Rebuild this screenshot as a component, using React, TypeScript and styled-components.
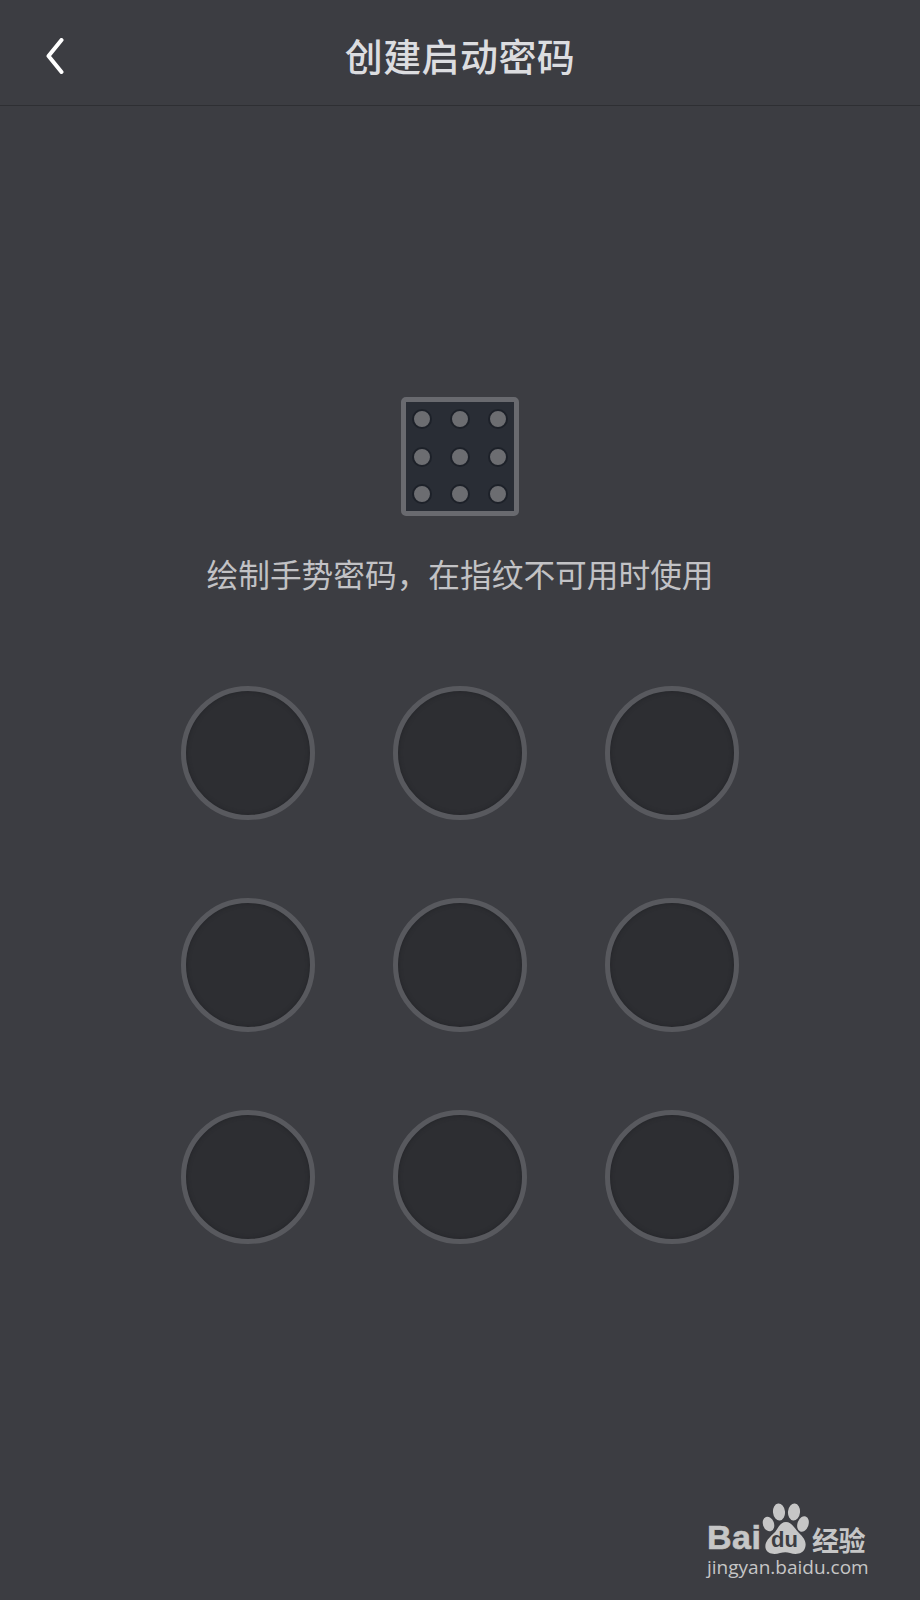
import React from "react";
import styled, { createGlobalStyle } from "styled-components";

const Global = createGlobalStyle`
  html, body { margin: 0; padding: 0; background: #3c3d42; }
  body { font-family: "Noto Sans CJK SC", "Liberation Sans", sans-serif; }
`;

const Page = styled.div`
  position: relative;
  width: 920px;
  height: 1600px;
  overflow: hidden;
  background: #3c3d42;
  display: flex;
  flex-direction: column;
  align-items: center;
`;

const Header = styled.header`
  box-sizing: border-box;
  width: 100%;
  height: 106px;
  padding: 0 46px 0;
  display: grid;
  grid-template-columns: 40px 1fr 40px;
  align-items: center;
  border-bottom: 1px solid #2e2f33;
`;

const BackButton = styled.button`
  width: 20px;
  height: 36px;
  padding: 0;
  margin-top: 6px;
  border: 0;
  background: none;
  display: flex;
  color: #ffffff;
`;

const Title = styled.h1`
  margin: 4px 0 0;
  text-align: center;
  font-size: 38px;
  line-height: 50px;
  letter-spacing: 0.4px;
  font-weight: 500;
  color: #dcdde0;
`;

const PatternBadge = styled.div`
  box-sizing: border-box;
  width: 118px;
  height: 119px;
  margin-top: 291px;
  padding: 7px 6px;
  border: 5px solid #696a6f;
  border-radius: 5px;
  background: #292d35;
  display: grid;
  grid-template-columns: repeat(3, 20px);
  grid-auto-rows: 20px;
  justify-content: space-between;
  align-content: space-between;
`;

const BadgeDot = styled.span`
  box-sizing: border-box;
  width: 20px;
  height: 20px;
  border-radius: 50%;
  border: 2px solid #1d2129;
  background: #6c6d71;
`;

const Hint = styled.p`
  margin: 35px 0 0;
  font-size: 31.7px;
  line-height: 44px;
  font-weight: 400;
  color: #c2c2c5;
  white-space: nowrap;
`;

const Keypad = styled.div`
  margin-top: 91px;
  display: grid;
  grid-template-columns: repeat(3, 134px);
  grid-auto-rows: 134px;
  gap: 78px;
`;

const Node = styled.div`
  box-sizing: border-box;
  border-radius: 50%;
  border: 5px solid #58595e;
  background: #2d2e32;
  box-shadow: inset 0 0 4px #232428;
`;

const Watermark = styled.div`
  position: absolute;
  left: 707px;
  top: 1503px;
  width: 165px;
  color: #c6c6c6;
`;

const LogoRow = styled.div`
  display: flex;
  align-items: flex-end;
  height: 52px;
`;

const BaiText = styled.span`
  font-family: "Liberation Sans", sans-serif;
  font-weight: 700;
  font-size: 34px;
  line-height: 36px;
  width: 55px;
  letter-spacing: 0.5px;
  -webkit-text-stroke: 0.6px #c6c6c6;
`;

const Paw = styled.div`
  position: relative;
  width: 47px;
  height: 52px;
`;

const PawSvg = styled.svg`
  display: block;
  width: 47px;
  height: 52px;
`;

const DuText = styled.span`
  position: absolute;
  left: 9px;
  bottom: 3px;
  font-family: "Liberation Sans", sans-serif;
  font-weight: 700;
  font-size: 22px;
  line-height: 24px;
  color: #3c3d42;
`;

const CnText = styled.span`
  font-size: 27px;
  line-height: 30px;
  font-weight: 700;
  margin-left: 3px;
  white-space: nowrap;
  letter-spacing: -0.5px;
`;

const UrlText = styled.div`
  font-family: "Open Sans", "Liberation Sans", sans-serif;
  font-size: 19px;
  line-height: 24px;
  white-space: nowrap;
`;

const App: React.FC = () => (
  <Page>
    <Global />
    <Header>
      <BackButton aria-label="返回">
        <svg width="20" height="36" viewBox="0 0 20 36" fill="none">
          <path d="M15.5 2 L2.5 18 L15.5 34" stroke="currentColor" strokeWidth="4" strokeLinecap="round" strokeLinejoin="round" />
        </svg>
      </BackButton>
      <Title>创建启动密码</Title>
      <span />
    </Header>
    <PatternBadge>
      {Array.from({ length: 9 }, (_, i) => <BadgeDot key={i} />)}
    </PatternBadge>
    <Hint>绘制手势密码，在指纹不可用时使用</Hint>
    <Keypad>
      {Array.from({ length: 9 }, (_, i) => <Node key={i} />)}
    </Keypad>
    <Watermark>
      <LogoRow>
        <BaiText>Bai</BaiText>
        <Paw>
          <PawSvg viewBox="0 0 47 52" fill="currentColor">
            <ellipse cx="6.5" cy="21" rx="5.5" ry="7.5" transform="rotate(-20 6.5 21)" />
            <ellipse cx="17" cy="9" rx="6" ry="8.5" transform="rotate(-6 17 9)" />
            <ellipse cx="32" cy="9" rx="6" ry="8.5" transform="rotate(6 32 9)" />
            <ellipse cx="41" cy="21" rx="5.5" ry="8" transform="rotate(20 41 21)" />
            <path d="M24 19 C30 19 32 25 37 30 C42 35 45 39 43 45 C41 51 34 52 28 50 C25 49 22 49 18 50 C12 52 5 51 3.5 45 C2.5 39 7 35 11 31 C16 27 17 19 24 19 Z" />
          </PawSvg>
          <DuText>du</DuText>
        </Paw>
        <CnText>经验</CnText>
      </LogoRow>
      <UrlText>jingyan.baidu.com</UrlText>
    </Watermark>
  </Page>
);

export default App;
